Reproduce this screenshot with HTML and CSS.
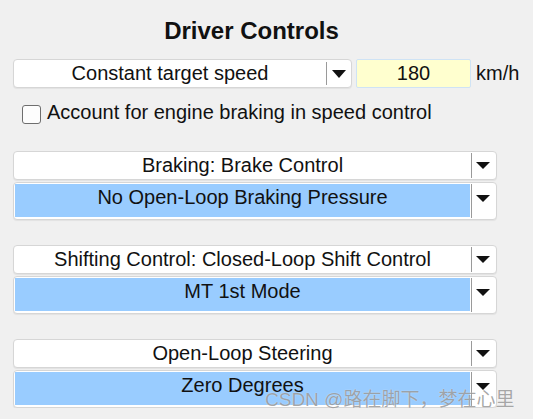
FILE: index.html
```html
<!DOCTYPE html>
<html lang="en">
<head>
  <meta charset="UTF-8">
  <title>Driver Controls</title>
  <meta name="viewport" content="width=device-width, initial-scale=1.0">
  <link rel="stylesheet" href="styles.css">
</head>
<body>
  <main class="panel">
    <h1 class="title">Driver Controls</h1>

    <div class="speed-row">
      <div class="dropdown dropdown-speed">
        <span class="dropdown-label">Constant target speed</span>
        <span class="dropdown-arrow"></span>
      </div>
      <div class="speed-input">180</div>
      <span class="unit">km/h</span>
    </div>

    <label class="check-row">
      <span class="check-box"></span>
      <span class="check-text">Account for engine braking in speed control</span>
    </label>

    <section class="control-group">
      <div class="dropdown">
        <span class="dropdown-label">Braking: Brake Control</span>
        <span class="dropdown-arrow"></span>
      </div>
      <div class="dropdown dropdown-list">
        <span class="dropdown-label">No Open-Loop Braking Pressure</span>
        <span class="dropdown-arrow"></span>
      </div>
    </section>

    <section class="control-group">
      <div class="dropdown">
        <span class="dropdown-label">Shifting Control: Closed-Loop Shift Control</span>
        <span class="dropdown-arrow"></span>
      </div>
      <div class="dropdown dropdown-list">
        <span class="dropdown-label">MT 1st Mode</span>
        <span class="dropdown-arrow"></span>
      </div>
    </section>

    <section class="control-group">
      <div class="dropdown">
        <span class="dropdown-label">Open-Loop Steering</span>
        <span class="dropdown-arrow"></span>
      </div>
      <div class="dropdown dropdown-list">
        <span class="dropdown-label">Zero Degrees</span>
        <span class="dropdown-arrow"></span>
      </div>
    </section>
  </main>

  <div class="watermark">CSDN @路在脚下，梦在心里</div>
</body>
</html>
```

FILE: styles.css
```css
*,
*::before,
*::after {
  box-sizing: border-box;
}
body {
  margin: 0;
  font-family: 'Liberation Sans', Arial, sans-serif;
  font-size: 20px;
  background: #f0f0f0;
  color: #111;
}
.panel {
  padding: 17px 0 0 13px;
  width: 533px;
}
.title {
  margin: 0 0 14px;
  padding-right: 20px;
  width: 497px;
  font-size: 24px;
  line-height: 28px;
  font-weight: bold;
  text-align: center;
  color: #111;
}

/* dropdowns */
.dropdown {
  display: flex;
  height: 29px;
  background: #fff;
  border: 1px solid #d6d6d6;
  border-radius: 4px;
  box-shadow: 0 1px 1px rgba(0, 0, 0, 0.06);
}
.dropdown-label {
  flex: 1;
  text-align: center;
  line-height: 27px;
  white-space: nowrap;
}
.dropdown-arrow {
  position: relative;
  width: 25px;
  margin: 1px 0;
  border-left: 1px solid #9a9a9a;
}
.dropdown-arrow::after {
  content: '';
  position: absolute;
  left: 4px;
  top: 9px;
  border-left: 7px solid transparent;
  border-right: 7px solid transparent;
  border-top: 7px solid #111;
}

/* speed row */
.speed-row {
  display: flex;
  align-items: center;
}
.dropdown-speed {
  width: 339px;
}
.dropdown-speed .dropdown-arrow {
  margin: 2px 0;
}
.dropdown-speed .dropdown-arrow::after {
  left: 5px;
  top: 8px;
  border-top-width: 8px;
}
.speed-input {
  width: 115px;
  height: 29px;
  margin-left: 4px;
  background: #ffffcf;
  border: 1px solid #cfe3f5;
  border-radius: 2px;
  text-align: center;
  line-height: 27px;
}
.unit {
  margin-left: 5px;
}

/* checkbox */
.check-row {
  display: flex;
  align-items: flex-start;
  margin-top: 12px;
  line-height: 24px;
}
.check-box {
  width: 19px;
  height: 19px;
  margin: 5px 6px 0 9px;
  background: #fdfdfd;
  border: 1.5px solid #6e6e6e;
  border-radius: 3px;
}

/* grouped controls */
.control-group {
  width: 484px;
  display: flex;
  flex-direction: column;
  gap: 2px;
  margin-top: 27px;
}
.control-group + .control-group {
  margin-top: 25px;
}
.dropdown-list {
  height: 38px;
}
.dropdown-list .dropdown-label {
  margin: 1px 1px 2px 1px;
  background: #99ccff;
  line-height: 26px;
}
.dropdown-list .dropdown-arrow::after {
  top: 11px;
}

.watermark {
  position: absolute;
  left: 265px;
  top: 388px;
  font-family: 'Liberation Sans', 'Noto Sans CJK SC', sans-serif;
  font-size: 19px;
  line-height: 24px;
  color: rgba(110, 110, 110, 0.6);
  text-shadow: 0 0 1px rgba(255, 255, 255, 0.8);
  white-space: nowrap;
}
```
